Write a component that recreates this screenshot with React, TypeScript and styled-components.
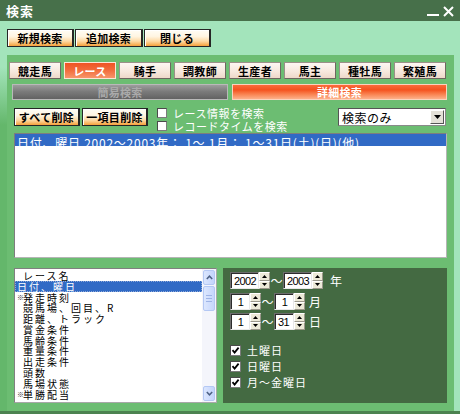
import React from "react";
import styled, { createGlobalStyle, css } from "styled-components";

const JP = `"Noto Sans CJK JP", "Noto Sans", sans-serif`;
const NUM = `"Liberation Sans", Arial, sans-serif`;

const GlobalStyle = createGlobalStyle`
  html, body { margin: 0; padding: 0; background: #6cbd72; }
  body { width: 460px; height: 414px; overflow: hidden; font-family: ${JP}; }
  * { box-sizing: border-box; }
`;

const Window = styled.div`
  width: 460px;
  height: 414px;
  display: flex;
  flex-direction: column;
  background: #6cbd72;
  border-bottom: 3px solid #4c8250;
`;

const TitleBar = styled.div`
  height: 21px;
  flex: none;
  background: #47704a;
  display: flex;
  align-items: center;
  justify-content: space-between;
  padding: 0 6px 0 6px;
  color: #fff;
  font: bold 13px ${JP};
  letter-spacing: 1px;
`;

const TitleControls = styled.div`
  display: flex;
  align-items: center;
  gap: 3px;
  padding-top: 1px;
`;

const Toolbar = styled.div`
  height: 34px;
  flex: none;
  background: #a3e4bb;
  display: flex;
  align-items: flex-start;
  gap: 1px;
  padding: 8px 0 0 7px;
`;

const orangeFace = css`
  border: 1px solid #262626;
  border-right-width: 2px;
  background: linear-gradient(to bottom, #fffdf6 0%, #fff5e2 40%, #fdd9a4 70%, #f6a03a 100%);
  box-shadow: inset 1px 1px 0 #ffffff;
  color: #000;
  font: bold 11px ${JP};
  letter-spacing: 0.3px;
  display: flex;
  align-items: center;
  justify-content: center;
  padding: 0;
`;

const OrangeButton = styled.button<{ $w: number }>`
  ${orangeFace};
  width: ${(p) => p.$w}px;
  height: 18px;
`;

const Body = styled.div`
  flex: 1;
  display: flex;
  min-height: 0;
`;

const LeftEdge = styled.div`
  width: 7px;
  flex: none;
  background: linear-gradient(to bottom, #a3e4bb 0px, #a3e4bb 12px, #64b76b 70px, #64b76b 100%);
`;

const RightEdge = styled.div`
  width: 6px;
  flex: none;
  background: #a3e4bb;
`;

const Panel = styled.div`
  flex: 1;
  display: flex;
  flex-direction: column;
  background: #6cbd72;
  padding: 7px 0 8px 0;
`;

const TabRow = styled.div`
  display: flex;
  gap: 3px;
  padding-left: 2px;
  height: 17px;
  flex: none;
`;

const Tab = styled.div<{ $active?: boolean }>`
  width: 52px;
  height: 17px;
  display: flex;
  align-items: center;
  justify-content: center;
  font: bold 11px ${JP};
  letter-spacing: 0.3px;
  ${(p) =>
    p.$active
      ? css`
          border: 1px solid #fde4d6;
          background: linear-gradient(to bottom, #ef5424 0%, #f26a3a 45%, #f7956a 100%);
          color: #fff;
        `
      : css`
          border: 1px solid #9b9089;
          border-right-color: #6f6660;
          border-bottom-color: #6f6660;
          background: linear-gradient(to bottom, #fdf7f2 0%, #f6e7dc 60%, #eed8c9 100%);
          color: #000;
        `}
`;

const ModeRow = styled.div`
  display: flex;
  gap: 4px;
  margin-top: 5px;
  padding-left: 5px;
  height: 16px;
  flex: none;
`;

const ModeButton = styled.div<{ $w: number; $active?: boolean }>`
  width: ${(p) => p.$w}px;
  height: 16px;
  display: flex;
  align-items: center;
  justify-content: center;
  font: bold 11px ${JP};
  letter-spacing: 0.3px;
  ${(p) =>
    p.$active
      ? css`
          border: 1px solid #fbd2bd;
          background: linear-gradient(to bottom, #fb6b3b 0%, #f5521f 35%, #f9814f 65%, #fdb08a 100%);
          color: #fff;
        `
      : css`
          border: 1px solid #b9b9b9;
          background: linear-gradient(to bottom, #9d9d9d 0%, #7c7c7c 45%, #626262 100%);
          color: #aaaaaa;
        `}
`;

const ActionRow = styled.div`
  display: flex;
  align-items: flex-start;
  margin-top: 8px;
  padding: 0 7px 0 7px;
  height: 19px;
  flex: none;
`;

const ActionButtons = styled.div`
  display: flex;
  gap: 2px;
`;

const CheckGroup = styled.div`
  display: flex;
  flex-direction: column;
  gap: 1px;
  margin-left: 9px;
  margin-top: -1px;
`;

const CheckLine = styled.label`
  display: flex;
  align-items: center;
  height: 12px;
  color: #fff;
  font: 11px ${JP};
  letter-spacing: 0.5px;
  line-height: 12px;
`;

const Box = styled.span<{ $size: number }>`
  width: ${(p) => p.$size}px;
  height: ${(p) => p.$size}px;
  flex: none;
  background: #fff;
  border: 1px solid #7b7b7b;
  border-top-color: #4a4a4a;
  border-left-color: #4a4a4a;
  display: flex;
  align-items: center;
  justify-content: center;
  margin-right: 6px;
`;

const Select = styled.div`
  margin-left: auto;
  margin-right: 1px;
  width: 108px;
  height: 18px;
  background: #fff;
  border: 1px solid #8a8a8a;
  border-top-color: #555;
  border-left-color: #555;
  display: flex;
  align-items: center;
  justify-content: space-between;
  padding: 0 1px 0 3px;
  font: 12px ${JP};
  color: #000;
  letter-spacing: 0.5px;
`;

const SelectArrow = styled.div`
  width: 14px;
  height: 14px;
  background: #e4e1d8;
  border: 1px solid #fff;
  border-right-color: #555;
  border-bottom-color: #555;
  display: flex;
  align-items: center;
  justify-content: center;
`;

const ResultList = styled.div`
  margin: 6px 7px 0 7px;
  height: 125px;
  flex: none;
  background: #fff;
  border: 1px solid #b5b5b5;
  border-top-color: #7d7d7d;
  border-left-color: #7d7d7d;
  overflow: hidden;
`;

const ResultRow = styled.div<{ $selected?: boolean }>`
  height: 12px;
  line-height: 12px;
  padding-left: 2px;
  font: 12px ${JP};
  letter-spacing: 0.75px;
  white-space: pre;
  color: ${(p) => (p.$selected ? "#fff" : "#000")};
  background: ${(p) => (p.$selected ? "#316ac5" : "transparent")};
`;

const BottomRow = styled.div`
  display: flex;
  gap: 6px;
  margin: 10px 7px 0 7px;
  height: 135px;
  flex: none;
`;

const FieldList = styled.div`
  width: 203px;
  flex: none;
  background: #fff;
  border: 1px solid #a8a8a8;
  border-top-color: #808080;
  border-left-color: #808080;
  display: flex;
  overflow: hidden;
`;

const FieldItems = styled.div`
  flex: 1;
  padding-top: 1px;
  overflow: hidden;
`;

const FieldItem = styled.div<{ $selected?: boolean }>`
  height: 10.8px;
  line-height: 10.8px;
  display: flex;
  align-items: center;
  font: 10px ${JP};
  letter-spacing: 2px;
  white-space: pre;
  padding-left: 2px;
  color: ${(p) => (p.$selected ? "#fff" : "#000")};
  ${(p) =>
    p.$selected &&
    css`
      background: #316ac5;
      outline: 1px dotted #8fa9d8;
      outline-offset: -1px;
    `}
`;

const Marker = styled.span`
  width: 6px;
  flex: none;
  font: 7px ${JP};
  letter-spacing: 0;
  color: #333;
  text-align: center;
`;

const Scrollbar = styled.div`
  width: 14px;
  flex: none;
  display: flex;
  flex-direction: column;
  background: #f4f5fb;
  padding: 1px;
  gap: 1px;
`;

const ScrollButton = styled.div`
  height: 15px;
  flex: none;
  border: 1px solid #b4c8f4;
  border-radius: 2px;
  background: linear-gradient(to right, #dbe6fe, #c3d4fc);
  display: flex;
  align-items: center;
  justify-content: center;
`;

const ScrollThumb = styled.div`
  height: 25px;
  flex: none;
  border: 1px solid #b4c8f4;
  border-radius: 2px;
  background: linear-gradient(to right, #dce7fe, #c6d6fc);
  display: flex;
  flex-direction: column;
  align-items: center;
  justify-content: center;
  gap: 2px;
`;

const Grip = styled.span`
  width: 6px;
  height: 1px;
  background: #9eb4e6;
`;

const ScrollTrack = styled.div`
  flex: 1;
`;

const CondPanel = styled.div`
  flex: 1;
  background: #446a42;
  padding: 4px 7px 0 7px;
  display: flex;
  flex-direction: column;
`;

const SpinRow = styled.div<{ $gapTop: number }>`
  display: flex;
  align-items: center;
  height: 17px;
  margin-top: ${(p) => p.$gapTop}px;
`;

const SpinInput = styled.div<{ $w: number; $align: string }>`
  width: ${(p) => p.$w}px;
  height: 17px;
  background: #fff;
  border: 1px solid #e8e8e8;
  border-top-color: #6d6d6d;
  border-left-color: #6d6d6d;
  box-shadow: inset 1px 1px 0 #2c2c2c;
  display: flex;
  align-items: center;
  justify-content: ${(p) => p.$align};
  padding: 1px 2px 0 3px;
  font: 11px ${NUM};
  letter-spacing: -0.6px;
  color: #000;
`;

const SpinButtons = styled.div`
  width: 11px;
  height: 17px;
  display: flex;
  flex-direction: column;
  background: #ece9d8;
`;

const SpinHalf = styled.div`
  flex: 1;
  border: 1px solid #fff;
  border-right-color: #9a978a;
  border-bottom-color: #9a978a;
  display: flex;
  align-items: center;
  justify-content: center;
`;

const Tilde = styled.span`
  width: 13px;
  text-align: center;
  color: #fff;
  font: 12px ${JP};
`;

const Unit = styled.span<{ $ml: number }>`
  margin-left: ${(p) => p.$ml}px;
  color: #fff;
  font: 12px ${JP};
`;

const DayChecks = styled.div`
  display: flex;
  flex-direction: column;
  margin-top: 14px;
  gap: 4px;
`;

const DayLine = styled.label`
  display: flex;
  align-items: center;
  height: 12px;
  color: #fff;
  font: 11px ${JP};
  letter-spacing: 1px;
`;

const CheckMark = () => (
  <svg width="9" height="9" viewBox="0 0 9 9">
    <path d="M1.5 4.2 L3.6 6.6 L7.6 1.6" stroke="#000" strokeWidth="1.8" fill="none" />
  </svg>
);

const Tri = ({ up }: { up?: boolean }) => (
  <svg width="5" height="3" viewBox="0 0 5 3">
    <path d={up ? "M2.5 0 L5 3 L0 3 Z" : "M0 0 L5 0 L2.5 3 Z"} fill="#000" />
  </svg>
);

const Chevron = ({ up }: { up?: boolean }) => (
  <svg width="7" height="5" viewBox="0 0 7 5">
    <path d={up ? "M0.8 4 L3.5 1.2 L6.2 4" : "M0.8 1 L3.5 3.8 L6.2 1"} stroke="#4d6185" strokeWidth="1.5" fill="none" />
  </svg>
);

const Spinner = ({ value, w, align }: { value: string; w: number; align: string }) => (
  <>
    <SpinInput $w={w} $align={align}>{value}</SpinInput>
    <SpinButtons>
      <SpinHalf><Tri up /></SpinHalf>
      <SpinHalf><Tri /></SpinHalf>
    </SpinButtons>
  </>
);

const tabs = ["競走馬", "レース", "騎手", "調教師", "生産者", "馬主", "種牡馬", "繁殖馬"];

const fields: { label: string; mark?: boolean; selected?: boolean }[] = [
  { label: "レース名" },
  { label: "日付、曜日", selected: true },
  { label: "発走時刻", mark: true },
  { label: "競馬場、回目、R" },
  { label: "距離、トラック" },
  { label: "賞金条件" },
  { label: "馬齢条件" },
  { label: "重量条件" },
  { label: "出走条件" },
  { label: "頭数" },
  { label: "馬場状態" },
  { label: "単勝配当", mark: true },
];

export default function App() {
  return (
    <>
      <GlobalStyle />
      <Window>
        <TitleBar>
          <span>検索</span>
          <TitleControls>
            <svg width="13" height="12" viewBox="0 0 13 12">
              <path d="M0 10 H12" stroke="#fff" strokeWidth="2" />
            </svg>
            <svg width="11" height="11" viewBox="0 0 11 11">
              <path d="M1 1 L10 10 M10 1 L1 10" stroke="#fff" strokeWidth="2" />
            </svg>
          </TitleControls>
        </TitleBar>
        <Toolbar>
          <OrangeButton $w={67}>新規検索</OrangeButton>
          <OrangeButton $w={68}>追加検索</OrangeButton>
          <OrangeButton $w={67}>閉じる</OrangeButton>
        </Toolbar>
        <Body>
          <LeftEdge />
          <Panel>
            <TabRow>
              {tabs.map((t) => (
                <Tab key={t} $active={t === "レース"}>{t}</Tab>
              ))}
            </TabRow>
            <ModeRow>
              <ModeButton $w={216}>簡易検索</ModeButton>
              <ModeButton $w={215} $active>詳細検索</ModeButton>
            </ModeRow>
            <ActionRow>
              <ActionButtons>
                <OrangeButton $w={66}>すべて削除</OrangeButton>
                <OrangeButton $w={66}>一項目削除</OrangeButton>
              </ActionButtons>
              <CheckGroup>
                <CheckLine><Box $size={10} />レース情報を検索</CheckLine>
                <CheckLine><Box $size={10} />レコードタイムを検索</CheckLine>
              </CheckGroup>
              <Select>
                <span>検索のみ</span>
                <SelectArrow>
                  <svg width="7" height="4" viewBox="0 0 7 4">
                    <path d="M0 0 H7 L3.5 4 Z" fill="#000" />
                  </svg>
                </SelectArrow>
              </Select>
            </ActionRow>
            <ResultList>
              <ResultRow $selected>{"日付、曜日 2002～2003年： 1～ 1月： 1～31日(土)(日)(他)"}</ResultRow>
            </ResultList>
            <BottomRow>
              <FieldList>
                <FieldItems>
                  {fields.map((f) => (
                    <FieldItem key={f.label} $selected={f.selected}>
                      {!f.selected && <Marker>{f.mark ? "※" : ""}</Marker>}
                      {f.label}
                    </FieldItem>
                  ))}
                </FieldItems>
                <Scrollbar>
                  <ScrollButton><Chevron up /></ScrollButton>
                  <ScrollThumb><Grip /><Grip /><Grip /></ScrollThumb>
                  <ScrollTrack />
                  <ScrollButton><Chevron /></ScrollButton>
                </Scrollbar>
              </FieldList>
              <CondPanel>
                <SpinRow $gapTop={0}>
                  <Spinner value="2002" w={29} align="flex-start" />
                  <Tilde>～</Tilde>
                  <Spinner value="2003" w={29} align="flex-start" />
                  <Unit $ml={7}>年</Unit>
                </SpinRow>
                <SpinRow $gapTop={4}>
                  <Spinner value="1" w={20} align="center" />
                  <Tilde>～</Tilde>
                  <Spinner value="1" w={20} align="center" />
                  <Unit $ml={4}>月</Unit>
                </SpinRow>
                <SpinRow $gapTop={3}>
                  <Spinner value="1" w={20} align="center" />
                  <Tilde>～</Tilde>
                  <Spinner value="31" w={20} align="flex-start" />
                  <Unit $ml={4}>日</Unit>
                </SpinRow>
                <DayChecks>
                  <DayLine><Box $size={11}><CheckMark /></Box>土曜日</DayLine>
                  <DayLine><Box $size={11}><CheckMark /></Box>日曜日</DayLine>
                  <DayLine><Box $size={11}><CheckMark /></Box>月～金曜日</DayLine>
                </DayChecks>
              </CondPanel>
            </BottomRow>
          </Panel>
          <RightEdge />
        </Body>
      </Window>
    </>
  );
}
